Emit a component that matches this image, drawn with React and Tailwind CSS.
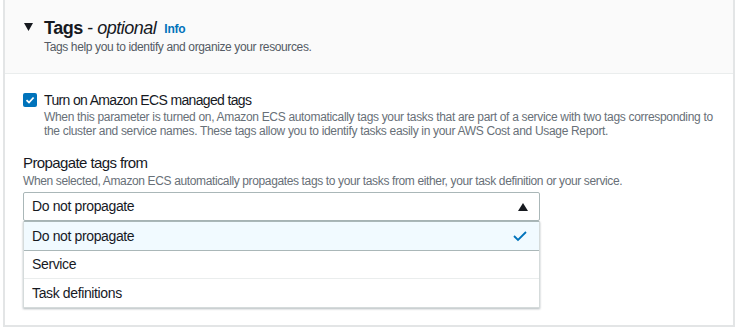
import React from "react";

const options = ["Do not propagate", "Service", "Task definitions"];

export default function App() {
  const selected = "Do not propagate";
  return (
    <div
      className="w-[740px] h-[328px] bg-white pl-[3px] pr-[5px]"
      style={{ fontFamily: '"Liberation Sans", Arial, sans-serif' }}
    >
      <div className="h-[327px] border-l-2 border-r-2 border-b-2 border-[#e3e5e6] bg-white">
        {/* header */}
        <div className="h-[74px] bg-[#fafafa] border-b border-[#eaeded] pl-[19px] pt-[16px]">
          <div className="flex items-center h-[24px]">
            <svg width="9" height="8" viewBox="0 0 9 8" className="mr-[11px] mt-[-3px]">
              <path d="M0 0 H9 L4.5 8 Z" fill="#16191f" />
            </svg>
            <h2 className="text-[18px] font-bold text-[#16191f] leading-[24px] tracking-[-0.5px]">
              Tags <span className="font-normal">-</span>{" "}
              <span className="italic font-normal">optional</span>
            </h2>
            <a className="ml-[8px] text-[12px] font-bold text-[#0073bb] leading-[24px] mt-[2px] tracking-[-0.2px]">Info</a>
          </div>
          <p className="ml-[20px] mt-[-2px] text-[12px] text-[#545b64] leading-[18px] tracking-[-0.37px]">
            Tags help you to identify and organize your resources.
          </p>
        </div>

        {/* body */}
        <div className="pl-[18px] pt-[17px]">
          <div className="flex gap-[7px]">
            <div className="w-[14px] h-[14px] rounded-[2px] bg-[#0073bb] flex items-center justify-center mt-[2px]">
              <svg width="10" height="10" viewBox="0 0 10 10">
                <path d="M1.5 5.2 L4 7.5 L8.6 2.5" fill="none" stroke="white" strokeWidth="1.8" />
              </svg>
            </div>
            <div>
              <div className="text-[14px] text-[#16191f] leading-[18px] tracking-[-0.65px]">Turn on Amazon ECS managed tags</div>
              <p className="mt-[1px] text-[12px] text-[#687078] leading-[14px] w-[680px] tracking-[-0.32px]">
                When this parameter is turned on, Amazon ECS automatically tags your tasks that are part of a service with two tags corresponding to the cluster and service names. These tags allow you to identify tasks easily in your AWS Cost and Usage Report.
              </p>
            </div>
          </div>

          <div className="mt-[15px]">
            <div className="text-[15px] text-[#16191f] leading-[20px] tracking-[-0.6px]">Propagate tags from</div>
            <p className="text-[12px] text-[#687078] leading-[16px] tracking-[-0.37px]">
              When selected, Amazon ECS automatically propagates tags to your tasks from either, your task definition or your service.
            </p>
          </div>

          <div className="w-[517px] mt-[3px]">
            <div className="h-[29px] border border-[#aab7b8] rounded-[2px] flex items-center justify-between pl-[8px] pr-[11px] bg-white">
              <span className="text-[14px] text-[#16191f] tracking-[-0.37px]">{selected}</span>
              <svg width="10" height="8" viewBox="0 0 10 8">
                <path d="M0 8 H10 L5 0 Z" fill="#16191f" />
              </svg>
            </div>
            <ul className="border border-[#d5dbdb] border-t-0 shadow-[0_1px_2px_rgba(0,28,36,0.3)] bg-white">
              {options.map((o, i) =>
                o === selected ? (
                  <li
                    key={o}
                    className="h-[30px] flex items-center justify-between pl-[8px] pr-[11px] bg-[#f1faff] border-y border-[#aab7b8] text-[14px] text-[#16191f] tracking-[-0.37px]"
                  >
                    {o}
                    <svg width="16" height="12" viewBox="0 0 16 12">
                      <path d="M2 6 L6 10 L14 2" fill="none" stroke="#0073bb" strokeWidth="1.8" />
                    </svg>
                  </li>
                ) : (
                  <li
                    key={o}
                    className={
                      "h-[28px] flex items-center pl-[8px] text-[14px] text-[#16191f] tracking-[-0.37px] " +
                      (i < options.length - 1 ? "border-b border-[#eaeded]" : "")
                    }
                  >
                    {o}
                  </li>
                )
              )}
            </ul>
          </div>
        </div>
      </div>
    </div>
  );
}
